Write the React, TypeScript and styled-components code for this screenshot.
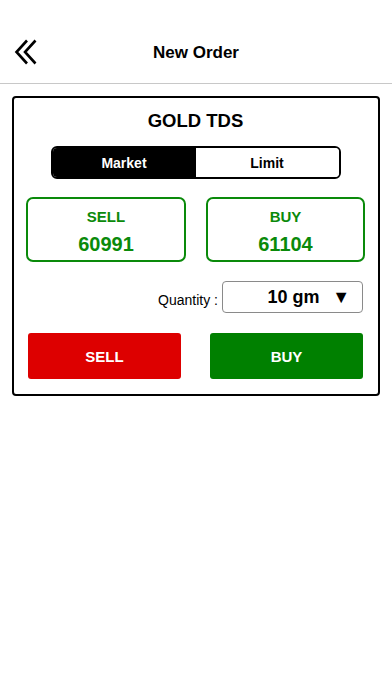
import React, { useState } from "react";
import styled, { createGlobalStyle } from "styled-components";

const Global = createGlobalStyle`
  html, body { margin: 0; padding: 0; background: #fff; }
  body { font-family: "Liberation Sans", Arial, sans-serif; color: #000; }
  * { box-sizing: border-box; }
`;

const Page = styled.div`
  width: 392px;
  min-height: 696px;
  background: #fff;
`;

const Header = styled.header`
  height: 84px;
  display: flex;
  align-items: center;
  justify-content: center;
  position: relative;
  border-bottom: 1px solid #c8c8c8;
  padding-top: 22px;
`;

const BackButton = styled.button`
  position: absolute;
  left: 12px;
  top: 38px;
  width: 28px;
  height: 28px;
  padding: 0;
  border: none;
  background: transparent;
  display: flex;
  align-items: center;
  justify-content: center;
`;

const Title = styled.h1`
  margin: 0;
  font-size: 17px;
  font-weight: 700;
`;

const Card = styled.section`
  margin: 12px 12px 0;
  border: 2px solid #000;
  border-radius: 4px;
  padding: 12px 13px 15px 12px;
  display: flex;
  flex-direction: column;
  align-items: stretch;
`;

const CardTitle = styled.h2`
  margin: 0;
  font-size: 18.5px;
  line-height: 22px;
  font-weight: 700;
  text-align: center;
`;

const Segment = styled.div`
  align-self: center;
  margin-top: 14px;
  width: 290px;
  height: 33px;
  border: 2px solid #000;
  border-radius: 6px;
  overflow: hidden;
  display: grid;
  grid-template-columns: 1fr 1fr;
`;

const SegButton = styled.button<{ $active: boolean }>`
  border: none;
  margin: 0;
  padding: 0;
  font-family: inherit;
  font-size: 14px;
  font-weight: 700;
  background: ${(p) => (p.$active ? "#000" : "#fff")};
  color: ${(p) => (p.$active ? "#fff" : "#000")};
`;

const PriceRow = styled.div`
  margin-top: 18px;
  display: grid;
  grid-template-columns: 160px 159px;
  justify-content: space-between;
`;

const PriceBox = styled.div`
  height: 65px;
  border: 2px solid #0a8a0a;
  border-radius: 7px;
  display: flex;
  flex-direction: column;
  align-items: center;
  justify-content: center;
  padding-top: 5px;
  color: #0a8a0a;
  font-weight: 700;
`;

const PriceLabel = styled.div`
  font-size: 15px;
  line-height: 18px;
`;

const PriceValue = styled.div`
  font-size: 20px;
  line-height: 24px;
  margin-top: 6px;
`;

const QtyRow = styled.div`
  margin-top: 19px;
  margin-right: 2px;
  display: flex;
  justify-content: flex-end;
  align-items: center;
  gap: 4px;
`;

const QtyLabel = styled.span`
  font-size: 14px;
  padding-top: 6px;
`;

const QtySelect = styled.div`
  width: 141px;
  height: 32px;
  border: 1px solid #8a8a8a;
  border-radius: 4px;
  display: flex;
  align-items: center;
  position: relative;
  justify-content: center;
  padding-left: 2px;
`;

const QtyValue = styled.span`
  font-size: 18px;
  font-weight: 700;
`;

const Caret = styled.span`
  position: absolute;
  right: 12px;
  top: 5px;
  font-size: 18px;
`;

const ActionRow = styled.div`
  margin-top: 20px;
  display: grid;
  grid-template-columns: 153px 153px;
  justify-content: space-between;
  padding: 0 2px 0 2px;
`;

const ActionButton = styled.button<{ $bg: string }>`
  height: 46px;
  border: none;
  border-radius: 3px;
  background: ${(p) => p.$bg};
  color: #fff;
  font-family: inherit;
  font-size: 15px;
  font-weight: 700;
`;

export default function App() {
  const [mode, setMode] = useState<"market" | "limit">("market");
  return (
    <Page>
      <Global />
      <Header>
        <BackButton aria-label="Back">
          <svg width="28" height="28" viewBox="0 0 28 28" fill="none">
            <path d="M15 2.5 L4.5 14 L15 25.5" stroke="#000" strokeWidth="2.6" />
            <path d="M23.5 2.5 L13 14 L23.5 25.5" stroke="#000" strokeWidth="2.6" />
          </svg>
        </BackButton>
        <Title>New Order</Title>
      </Header>
      <Card>
        <CardTitle>GOLD TDS</CardTitle>
        <Segment>
          <SegButton $active={mode === "market"} onClick={() => setMode("market")}>
            Market
          </SegButton>
          <SegButton $active={mode === "limit"} onClick={() => setMode("limit")}>
            Limit
          </SegButton>
        </Segment>
        <PriceRow>
          <PriceBox>
            <PriceLabel>SELL</PriceLabel>
            <PriceValue>60991</PriceValue>
          </PriceBox>
          <PriceBox>
            <PriceLabel>BUY</PriceLabel>
            <PriceValue>61104</PriceValue>
          </PriceBox>
        </PriceRow>
        <QtyRow>
          <QtyLabel>Quantity :</QtyLabel>
          <QtySelect>
            <QtyValue>10 gm</QtyValue>
            <Caret>▼</Caret>
          </QtySelect>
        </QtyRow>
        <ActionRow>
          <ActionButton $bg="#dd0000">SELL</ActionButton>
          <ActionButton $bg="#008000">BUY</ActionButton>
        </ActionRow>
      </Card>
    </Page>
  );
}
